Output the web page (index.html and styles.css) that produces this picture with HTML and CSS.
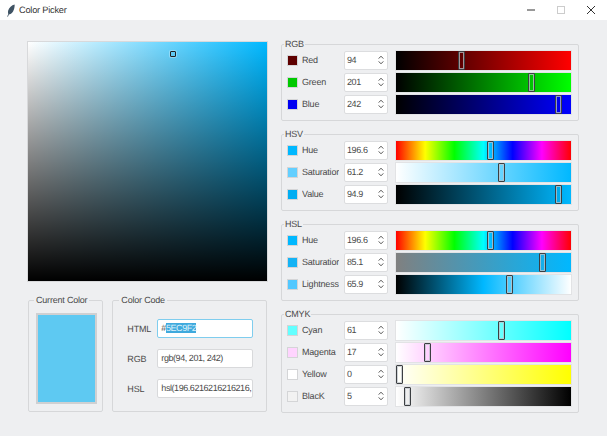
FILE: index.html
```html
<!doctype html>
<html>
  <head>
    <title>Color Picker</title>
    <link rel="stylesheet" href="styles.css">
  </head>

  <body>
    <!-- Title bar -->
    <header class="titlebar">
      <svg class="feather" width="10" height="13" viewBox="0 0 10 13"><path d="M8.6 0.4C5.6 1 3 3.4 2.2 6.6C1.9 8 1.9 9.2 2.3 10L1.2 12.6L1.9 12.8L2.9 10.4C5.2 10.4 7 8.6 7.9 5.6C8.5 3.6 8.8 1.8 8.6 0.4Z" fill="#3f5364"/></svg>
      <span class="app-title">Color Picker</span>
      <div class="win-buttons">
        <svg width="10" height="10" viewBox="0 0 10 10"><path d="M1 5H9" stroke="#333" fill="none"/></svg>
        <svg width="10" height="10" viewBox="0 0 10 10"><rect x="1.5" y="1.5" width="7" height="7" stroke="#ccc" fill="none"/></svg>
        <svg width="10" height="10" viewBox="0 0 10 10"><path d="M1 1L9 9M9 1L1 9" stroke="#333" fill="none"/></svg>
      </div>
    </header>

    <main class="content">
      <div class="left-col">
        <div class="sv-box">
          <div class="sv-marker" style="left:142px;top:9px"></div>
        </div>
        <div class="left-bottom">
          <fieldset class="group current-group">
            <legend>Current Color</legend>
            <div class="preview"></div>
          </fieldset>
          <fieldset class="group code-group">
            <legend>Color Code</legend>
            <div class="code-row">
              <label>HTML</label>
              <div class="code-input focused">#<span class="selected">5EC9F2</span></div>
            </div>
            <div class="code-row">
              <label>RGB</label>
              <div class="code-input">rgb(94, 201, 242)</div>
            </div>
            <div class="code-row">
              <label>HSL</label>
              <div class="code-input">hsl(196.6216216216216, 85.1%, 65.9%)</div>
            </div>
          </fieldset>
        </div>
      </div>

      <div class="right-col">
        <!-- RGB -->
        <fieldset class="group">
          <legend>RGB</legend>
          <div class="row">
            <div class="swatch c-red"></div><div class="name">Red</div>
            <div class="spin"><span>94</span><svg width="6" height="10" viewBox="0 0 6 10"><path d="M0.7 3.6L3 1.2L5.3 3.6M0.7 6.4L3 8.8L5.3 6.4" stroke="#555" fill="none"/></svg></div>
            <div class="track t-red"><div class="thumb" style="left:62px"></div></div>
          </div>
          <div class="row">
            <div class="swatch c-green"></div><div class="name">Green</div>
            <div class="spin"><span>201</span><svg width="6" height="10" viewBox="0 0 6 10"><path d="M0.7 3.6L3 1.2L5.3 3.6M0.7 6.4L3 8.8L5.3 6.4" stroke="#555" fill="none"/></svg></div>
            <div class="track t-green"><div class="thumb" style="left:132px"></div></div>
          </div>
          <div class="row">
            <div class="swatch c-blue"></div><div class="name">Blue</div>
            <div class="spin"><span>242</span><svg width="6" height="10" viewBox="0 0 6 10"><path d="M0.7 3.6L3 1.2L5.3 3.6M0.7 6.4L3 8.8L5.3 6.4" stroke="#555" fill="none"/></svg></div>
            <div class="track t-blue"><div class="thumb" style="left:159px"></div></div>
          </div>
        </fieldset>

        <!-- HSV -->
        <fieldset class="group">
          <legend>HSV</legend>
          <div class="row">
            <div class="swatch c-hue"></div><div class="name">Hue</div>
            <div class="spin"><span>196.6</span><svg width="6" height="10" viewBox="0 0 6 10"><path d="M0.7 3.6L3 1.2L5.3 3.6M0.7 6.4L3 8.8L5.3 6.4" stroke="#555" fill="none"/></svg></div>
            <div class="track t-hue"><div class="thumb" style="left:91px"></div></div>
          </div>
          <div class="row">
            <div class="swatch c-sat"></div><div class="name">Saturation</div>
            <div class="spin"><span>61.2</span><svg width="6" height="10" viewBox="0 0 6 10"><path d="M0.7 3.6L3 1.2L5.3 3.6M0.7 6.4L3 8.8L5.3 6.4" stroke="#555" fill="none"/></svg></div>
            <div class="track t-sat"><div class="thumb" style="left:102px"></div></div>
          </div>
          <div class="row">
            <div class="swatch c-val"></div><div class="name">Value</div>
            <div class="spin"><span>94.9</span><svg width="6" height="10" viewBox="0 0 6 10"><path d="M0.7 3.6L3 1.2L5.3 3.6M0.7 6.4L3 8.8L5.3 6.4" stroke="#555" fill="none"/></svg></div>
            <div class="track t-val"><div class="thumb" style="left:159px"></div></div>
          </div>
        </fieldset>

        <!-- HSL -->
        <fieldset class="group">
          <legend>HSL</legend>
          <div class="row">
            <div class="swatch c-hue"></div><div class="name">Hue</div>
            <div class="spin"><span>196.6</span><svg width="6" height="10" viewBox="0 0 6 10"><path d="M0.7 3.6L3 1.2L5.3 3.6M0.7 6.4L3 8.8L5.3 6.4" stroke="#555" fill="none"/></svg></div>
            <div class="track t-hue"><div class="thumb" style="left:91px"></div></div>
          </div>
          <div class="row">
            <div class="swatch c-hsat"></div><div class="name">Saturation</div>
            <div class="spin"><span>85.1</span><svg width="6" height="10" viewBox="0 0 6 10"><path d="M0.7 3.6L3 1.2L5.3 3.6M0.7 6.4L3 8.8L5.3 6.4" stroke="#555" fill="none"/></svg></div>
            <div class="track t-hsat"><div class="thumb" style="left:143px"></div></div>
          </div>
          <div class="row">
            <div class="swatch c-light"></div><div class="name">Lightness</div>
            <div class="spin"><span>65.9</span><svg width="6" height="10" viewBox="0 0 6 10"><path d="M0.7 3.6L3 1.2L5.3 3.6M0.7 6.4L3 8.8L5.3 6.4" stroke="#555" fill="none"/></svg></div>
            <div class="track t-light"><div class="thumb" style="left:110px"></div></div>
          </div>
        </fieldset>

        <!-- CMYK -->
        <fieldset class="group">
          <legend>CMYK</legend>
          <div class="row">
            <div class="swatch c-cyan"></div><div class="name">Cyan</div>
            <div class="spin"><span>61</span><svg width="6" height="10" viewBox="0 0 6 10"><path d="M0.7 3.6L3 1.2L5.3 3.6M0.7 6.4L3 8.8L5.3 6.4" stroke="#555" fill="none"/></svg></div>
            <div class="track t-cyan"><div class="thumb" style="left:102px"></div></div>
          </div>
          <div class="row">
            <div class="swatch c-mag"></div><div class="name">Magenta</div>
            <div class="spin"><span>17</span><svg width="6" height="10" viewBox="0 0 6 10"><path d="M0.7 3.6L3 1.2L5.3 3.6M0.7 6.4L3 8.8L5.3 6.4" stroke="#555" fill="none"/></svg></div>
            <div class="track t-mag"><div class="thumb" style="left:28px"></div></div>
          </div>
          <div class="row">
            <div class="swatch c-yel"></div><div class="name">Yellow</div>
            <div class="spin"><span>0</span><svg width="6" height="10" viewBox="0 0 6 10"><path d="M0.7 3.6L3 1.2L5.3 3.6M0.7 6.4L3 8.8L5.3 6.4" stroke="#555" fill="none"/></svg></div>
            <div class="track t-yel"><div class="thumb" style="left:0px"></div></div>
          </div>
          <div class="row">
            <div class="swatch c-blk"></div><div class="name">BlacK</div>
            <div class="spin"><span>5</span><svg width="6" height="10" viewBox="0 0 6 10"><path d="M0.7 3.6L3 1.2L5.3 3.6M0.7 6.4L3 8.8L5.3 6.4" stroke="#555" fill="none"/></svg></div>
            <div class="track t-blk"><div class="thumb" style="left:8px"></div></div>
          </div>
        </fieldset>
      </div>
    </main>
  </body>
</html>
```

FILE: styles.css
```css
html, body {
  margin: 0;
  height: 436px;
  overflow: hidden;
}

body {
  background: #eeeff1;
  font-family: "Liberation Sans", Arial, sans-serif;
  font-size: 9px;
  letter-spacing: -.2px;
  text-rendering: geometricPrecision;
  color: #4a4a4a;
}

.titlebar {
  display: flex;
  align-items: center;
  height: 20px;
  padding-left: 6px;
  background: #fff;
}

.feather {
  margin-right: 3px;
}

.app-title {
  font-size: 9.2px;
  color: #333;
}

.win-buttons {
  display: flex;
  gap: 20px;
  margin-left: auto;
  padding-right: 11px;
}

.content {
  display: flex;
  align-items: flex-start;
  padding: 18px 0 0 28px;
}

.left-col {
  width: 239px;
  padding-top: 4px;
  margin-right: 14px;
}

.sv-box {
  position: relative;
  width: 239px;
  height: 239px;
  outline: 1px solid #d8d9db;
  background:
    linear-gradient(to bottom, rgba(0,0,0,0), #000),
    linear-gradient(to right, #fff, #00b8ff);
}

.sv-marker {
  position: absolute;
  width: 4px;
  height: 4px;
  border: 1px solid #222;
  border-radius: 1px;
  box-shadow: 0 0 0 1px rgba(255,255,255,.3);
}

.left-bottom {
  display: flex;
  gap: 9px;
  margin-top: 13px;
}

.group {
  margin: 0 0 7px;
  padding: 1px 0 6px 5px;
  border: 1px solid #d6d7d9;
  border-radius: 2px;
  min-width: 0;
}

.group legend {
  margin-left: -3px;
  padding: 0 1px;
  line-height: 12px;
}

.right-col {
  width: 298px;
}

.current-group {
  width: 76px;
  box-sizing: border-box;
  height: 118px;
  margin: 0;
  padding: 7px 0 0 7px;
}

.current-group legend {
  margin-left: -2px;
  padding: 0 2px;
}

.preview {
  width: 57px;
  height: 87px;
  border: 2px solid #cfd0d2;
  background: #5ec9f2;
}

.code-group {
  width: 156px;
  box-sizing: border-box;
  height: 118px;
  margin: 0;
  padding: 13px 0 0 14px;
}

.code-group legend {
  margin-left: -8px;
  padding: 0 2px;
}

.code-row {
  display: flex;
  align-items: center;
  margin-bottom: 11px;
}

.code-row label {
  width: 30px;
}

.code-input {
  box-sizing: border-box;
  width: 96px;
  height: 19px;
  padding: 0 2px 0 3px;
  line-height: 17px;
  letter-spacing: -.44px;
  background: #fff;
  border: 1px solid #d8d9db;
  border-radius: 2px;
  white-space: nowrap;
  overflow: hidden;
}

.code-input.focused {
  border-color: #7fcdee;
}

.selected {
  background: #3fa9dd;
  color: #dff2fb;
}

.row {
  display: flex;
  align-items: center;
  height: 19px;
  margin-bottom: 3px;
}

.row:last-child {
  margin-bottom: 0;
}

.swatch {
  box-sizing: border-box;
  width: 11px;
  height: 11px;
  border: 1px solid #d4d5d7;
  margin-right: 4px;
}

.name {
  width: 37px;
  margin-right: 5px;
  padding-bottom: 1px;
  white-space: nowrap;
  overflow: hidden;
}

.spin {
  box-sizing: border-box;
  display: flex;
  align-items: center;
  justify-content: space-between;
  width: 44px;
  height: 19px;
  margin-right: 7px;
  padding: 0 3px 1px 2px;
  letter-spacing: -.4px;
  background: #fff;
  border: 1px solid #dcdddf;
  border-radius: 2px;
}

.track {
  position: relative;
  box-sizing: border-box;
  flex: none;
  width: 177px;
  height: 21px;
  border: 1px solid #e2e3e5;
}

.thumb {
  position: absolute;
  top: 0;
  box-sizing: border-box;
  width: 7px;
  height: 19px;
  border: 1px solid #3c3f42;
  border-radius: 1px;
  box-shadow: inset 0 0 0 1px rgba(190,195,200,.75);
}

.t-red { background: linear-gradient(to right, #000, #f00); }
.t-green { background: linear-gradient(to right, #000, #0f0); }
.t-blue { background: linear-gradient(to right, #000, #00f); }
.t-hue { background: linear-gradient(to right, #f00, #ff0, #0f0, #0ff, #00f, #f0f, #f00); }
.t-sat { background: linear-gradient(to right, #fff, #00b8ff); }
.t-val { background: linear-gradient(to right, #000, #00b8ff); }
.t-hsat { background: linear-gradient(to right, #808080, #00b8ff); }
.t-light { background: linear-gradient(to right, #000, #00b8ff, #fff); }
.t-cyan { background: linear-gradient(to right, #fff, #0ff); }
.t-mag { background: linear-gradient(to right, #fff, #f0f); }
.t-yel { background: linear-gradient(to right, #fff, #ff0); }
.t-blk { background: linear-gradient(to right, #fff, #000); }

.c-red { background: #5e0000; }
.c-green { background: #00c900; }
.c-blue { background: #0000f2; }
.c-hue { background: #00b8ff; }
.c-sat { background: #63cfff; }
.c-val { background: #00adf2; }
.c-hsat { background: #14b3f5; }
.c-light { background: #52c8ff; }
.c-cyan { background: #63ffff; }
.c-mag { background: #ffd4ff; }
.c-yel { background: #fff; }
.c-blk { background: #f2f2f2; }
```
